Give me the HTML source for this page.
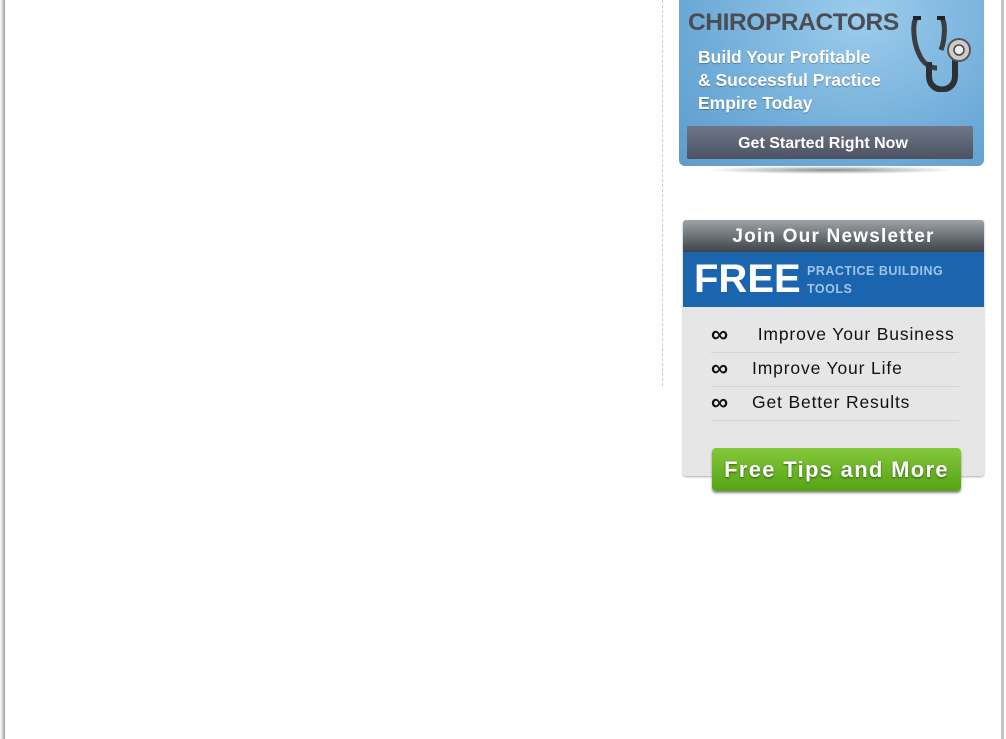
<!DOCTYPE html>
<html><head><meta charset="utf-8"><style>
body{margin:0;width:1006px;height:739px;background:#fff;position:relative;overflow:hidden;font-family:"Liberation Sans",sans-serif}
.lb{position:absolute;left:0;top:0;width:5px;height:739px;background:linear-gradient(90deg,#fff,#ccc 60%,#999)}
.rb{position:absolute;left:1001px;top:0;width:3px;height:739px;background:#c4c4c4}
.dash{position:absolute;left:662px;top:0;height:386px;border-left:1px dashed #ccc}
.chiro{position:absolute;left:679px;top:0;width:305px;height:166px;border-radius:0 0 6px 6px;background:radial-gradient(ellipse at 60% 10%,#9cccec,#6aa8d6 70%,#5d9ccc)}
.chiro h1{position:absolute;left:9px;top:9px;margin:0;font-size:24.5px;color:#4a4d52;letter-spacing:-.4px}
.chiro p{position:absolute;left:19px;top:46px;margin:0;font-size:17.5px;line-height:23px;font-weight:bold;color:#fff;text-shadow:0 1px 1px rgba(0,0,0,.3)}
.gs{position:absolute;left:8px;top:126px;width:286px;height:33px;border-radius:2px;background:linear-gradient(#6f7786,#4c5262);color:#fff;font-weight:bold;font-size:16px;text-align:center;line-height:36px;text-indent:-14px}
.sh{position:absolute;left:705px;top:166px;width:252px;height:8px;border-radius:50%;background:radial-gradient(ellipse,rgba(0,0,0,.45),rgba(0,0,0,0) 70%)}
.nl{position:absolute;left:683px;top:220px;width:301px;height:256px;background:#e6e6e6;border-radius:3px;box-shadow:0 1px 2px #aaa}
.nh{height:32px;background:linear-gradient(#9da2a7,#3e4349);border-radius:3px 3px 0 0;color:#fff;font-weight:bold;font-size:19px;letter-spacing:1.2px;text-align:center;line-height:34px}
.fr{height:55px;background:#1b64ae;position:relative}
.fr b{position:absolute;left:11px;top:5px;font-size:40px;color:#fff}
.fr span{position:absolute;left:124px;top:10px;font-size:12.5px;font-weight:bold;color:#9fc4ec;line-height:18px;letter-spacing:.5px}
.it{position:absolute;left:28px;width:248px;height:33px;border-bottom:1px solid #d3d3d3;font-size:17.5px;letter-spacing:.85px;color:#111;line-height:30px}
.it i{font-style:normal;font-weight:bold;display:inline-block;width:41px;font-size:24px;vertical-align:-2px}
.btn{position:absolute;left:29px;top:228px;width:249px;height:43px;border-radius:4px;background:linear-gradient(#84c83a,#55a415);box-shadow:0 2px 2px #888;color:#fff;font-weight:bold;font-size:22px;letter-spacing:1.3px;text-align:center;line-height:44px;text-shadow:0 1px 2px rgba(0,0,0,.5)}
</style></head><body>
<div class="lb"></div><div class="rb"></div><div class="dash"></div>
<div class="sh"></div>
<div class="chiro"><h1>CHIROPRACTORS</h1>
<p>Build Your Profitable<br>&amp; Successful Practice<br>Empire Today</p>
<svg style="position:absolute;left:228px;top:12px" width="70" height="80" viewBox="0 0 70 80">
<path d="M10 6 C5 8 6 30 12 42 C16 52 24 56 30 56" fill="none" stroke="#3a3d42" stroke-width="5"/>
<path d="M34 6 C39 8 38 28 34 38" fill="none" stroke="#3a3d42" stroke-width="5"/>
<path d="M22 50 L22 64 C22 82 48 82 48 64 L48 46" fill="none" stroke="#2c2f33" stroke-width="6"/>
<rect x="6" y="4" width="8" height="4" fill="#222"/><rect x="30" y="4" width="8" height="4" fill="#222"/>
<circle cx="52" cy="38" r="11" fill="#ccc" stroke="#555" stroke-width="2"/><circle cx="52" cy="38" r="5" fill="#eee" stroke="#444" stroke-width="1.5"/>
</svg>
<div class="gs">Get Started Right Now</div></div>
<div class="nl"><div class="nh">Join Our Newsletter</div>
<div class="fr"><b>FREE</b><span>PRACTICE BUILDING<br>TOOLS</span></div>
<div class="it" style="top:99px"><i>∞</i>&nbsp;Improve Your Business</div>
<div class="it" style="top:133px"><i>∞</i>Improve Your Life</div>
<div class="it" style="top:167px"><i>∞</i>Get Better Results</div>
<div class="btn">Free Tips and More</div></div>
</body></html>
